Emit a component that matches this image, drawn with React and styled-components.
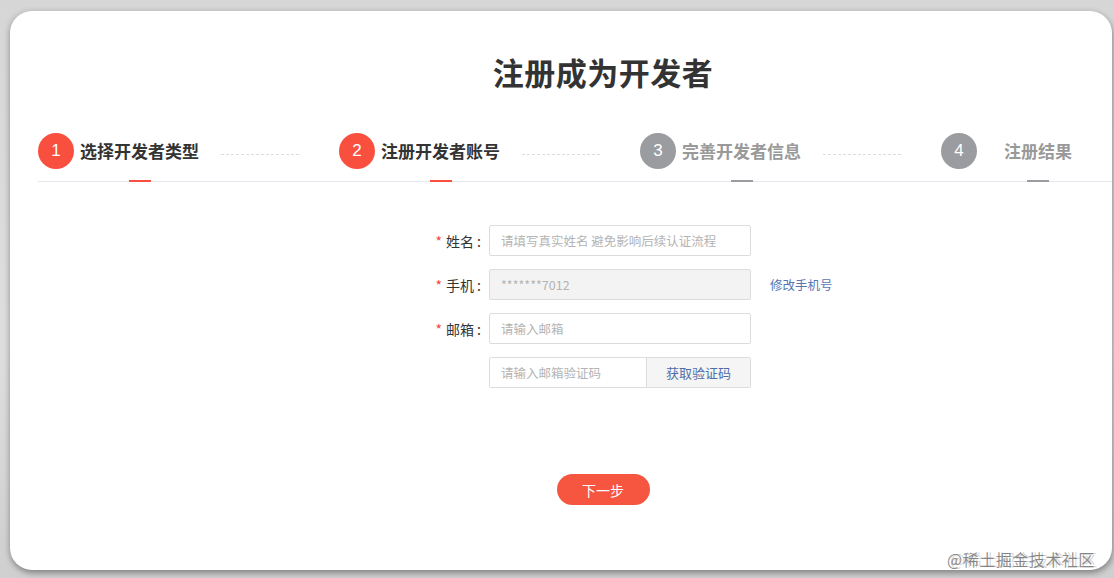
import React from "react";
import styled, { createGlobalStyle } from "styled-components";

const Global = createGlobalStyle`
  html, body { margin: 0; padding: 0; }
  body {
    width: 1114px;
    height: 578px;
    overflow: hidden;
    background: linear-gradient(180deg, #d6d6d6 0%, #dedede 60%, #cfcfcf 100%);
    font-family: "Noto Sans CJK SC", "Noto Sans", sans-serif;
  }
`;

const Page = styled.div`
  position: relative;
  width: 1114px;
  height: 578px;
  padding: 11px 2px 8px 10px;
  box-sizing: border-box;
`;

const Card = styled.div`
  width: 1102px;
  height: 559px;
  background: #fff;
  border-radius: 22px;
  overflow: hidden;
  box-shadow: 1px 3px 6px rgba(0, 0, 0, 0.35), -2px 0 6px rgba(0, 0, 0, 0.08);
  padding-left: 28px;
  box-sizing: border-box;
`;

const Content = styled.div`
  width: 1130px;
  display: flex;
  flex-direction: column;
`;

const Title = styled.h1`
  margin: 41px 0 0;
  height: 40px;
  line-height: 40px;
  text-align: center;
  font-size: 31px;
  font-weight: 700;
  color: #333;
  letter-spacing: 0.5px;
`;

const Steps = styled.div`
  margin-top: 41px;
  display: grid;
  grid-template-columns: repeat(4, 301px);
  padding-bottom: 12px;
  border-bottom: 1px solid #e6e6ee;
  width: 1076px;
`;

const Step = styled.div`
  display: flex;
  align-items: center;
  height: 36px;
`;

const Circle = styled.div`
  width: 36px;
  height: 36px;
  flex: none;
  border-radius: 50%;
  background: ${(p) => (p.$active ? "#f94f3e" : "#9a9c9f")};
  color: #fff;
  display: flex;
  align-items: center;
  justify-content: center;
  font-family: "Liberation Sans", Arial, sans-serif;
  font-size: 17px;
`;

const Label = styled.div`
  position: relative;
  min-width: 110px;
  margin-left: 6px;
  display: flex;
  justify-content: center;
  font-size: 17px;
  font-weight: 700;
  line-height: 22px;
  white-space: nowrap;
  color: ${(p) => (p.$active ? "#333" : "#999")};
  &::after {
    content: "";
    position: absolute;
    left: 50%;
    margin-left: -11px;
    top: 40px;
    width: 22px;
    height: 2px;
    background: ${(p) => (p.$active ? "#f94f3e" : "#9a9c9f")};
  }
`;

const Dash = styled.div`
  width: 78px;
  margin-left: 22px;
  margin-top: 6px;
  border-top: 1px dashed #dcdcdc;
`;

const Form = styled.div`
  margin: 43px 0 0 363px;
  display: flex;
  flex-direction: column;
  gap: 13px;
`;

const Row = styled.div`
  display: grid;
  grid-template-columns: 80px 262px auto;
  column-gap: 8px;
  align-items: center;
  height: 31px;
`;

const FieldLabel = styled.label`
  text-align: right;
  font-size: 14px;
  color: #333;
  white-space: nowrap;
`;

const Star = styled.span`
  color: #f0483c;
  margin-right: 4px;
`;

const Colon = styled.span`
  margin-left: 3px;
`;

const Input = styled.input`
  box-sizing: border-box;
  width: 100%;
  height: 31px;
  border: 1px solid #dcdcdc;
  border-radius: 2px;
  padding: 0 11px;
  font-family: inherit;
  font-size: 12.5px;
  color: #333;
  background: ${(p) => (p.disabled ? "#f3f3f3" : "#fff")};
  outline: none;
  &::placeholder { color: #b4b4b4; }
`;

const Group = styled.div`
  display: flex;
  height: 31px;
  box-sizing: border-box;
  border: 1px solid #dcdcdc;
  border-radius: 2px;
  overflow: hidden;
`;

const GroupInput = styled.input`
  flex: 1;
  min-width: 0;
  border: none;
  padding: 0 11px;
  font-family: inherit;
  font-size: 12.5px;
  outline: none;
  &::placeholder { color: #b4b4b4; }
`;

const CodeButton = styled.button`
  width: 104px;
  flex: none;
  border: none;
  border-left: 1px solid #dcdcdc;
  background: #f5f5f5;
  color: #4f6ea8;
  font-family: inherit;
  font-size: 13px;
  padding: 0;
`;

const Link = styled.a`
  margin-left: 11px;
  font-size: 12.5px;
  color: #5677b3;
  white-space: nowrap;
  text-decoration: none;
`;

const NextButton = styled.button`
  align-self: center;
  margin-top: 86px;
  width: 93px;
  height: 31px;
  border: none;
  border-radius: 16px;
  background: #f6553f;
  color: #fff;
  font-family: inherit;
  font-size: 14px;
  padding: 0;
`;

const Watermark = styled.div`
  position: absolute;
  left: 947px;
  top: 549px;
  font-size: 16px;
  line-height: 20px;
  color: rgba(105, 105, 105, 0.75);
  white-space: nowrap;
  letter-spacing: 0.5px;
  text-shadow: 3px 0 0 rgba(140, 140, 140, 0.35);
`;

const steps = [
  { n: 1, t: "选择开发者类型", active: true },
  { n: 2, t: "注册开发者账号", active: true },
  { n: 3, t: "完善开发者信息", active: false },
  { n: 4, t: "注册结果", active: false },
];

export default function App() {
  return (
    <>
      <Global />
      <Page>
        <Card>
          <Content>
            <Title>注册成为开发者</Title>
            <Steps>
              {steps.map((s) => (
                <Step key={s.n}>
                  <Circle $active={s.active}>{s.n}</Circle>
                  <Label $active={s.active}>{s.t}</Label>
                  {s.n < 4 && <Dash />}
                </Step>
              ))}
            </Steps>
            <Form>
              <Row>
                <FieldLabel><Star>*</Star>姓名<Colon>:</Colon></FieldLabel>
                <Input placeholder="请填写真实姓名 避免影响后续认证流程" />
              </Row>
              <Row>
                <FieldLabel><Star>*</Star>手机<Colon>:</Colon></FieldLabel>
                <Input disabled placeholder="*******7012" />
                <Link href="#">修改手机号</Link>
              </Row>
              <Row>
                <FieldLabel><Star>*</Star>邮箱<Colon>:</Colon></FieldLabel>
                <Input placeholder="请输入邮箱" />
              </Row>
              <Row>
                <span />
                <Group>
                  <GroupInput placeholder="请输入邮箱验证码" />
                  <CodeButton>获取验证码</CodeButton>
                </Group>
              </Row>
            </Form>
            <NextButton>下一步</NextButton>
          </Content>
        </Card>
        <Watermark>@稀土掘金技术社区</Watermark>
      </Page>
    </>
  );
}
